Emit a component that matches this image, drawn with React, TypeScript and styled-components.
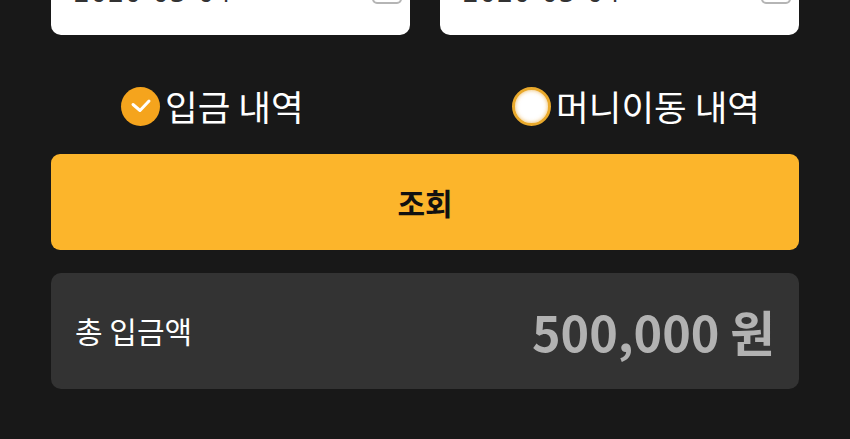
import React, { useState } from "react";
import styled, { createGlobalStyle } from "styled-components";

const Global = createGlobalStyle`
  html, body { margin: 0; padding: 0; background: #181818; overflow: hidden; }
  body { font-family: "Noto Sans CJK KR", "Noto Sans", sans-serif; }
`;

const Page = styled.div`
  width: 850px;
  height: 439px;
  box-sizing: border-box;
  padding: 0 51px;
  display: flex;
  flex-direction: column;
  overflow: hidden;
`;

const DateRow = styled.div`
  display: flex;
  gap: 30px;
  margin-top: -41px;
`;

const DateField = styled.div`
  flex: 1;
  height: 76px;
  background: #ffffff;
  border-radius: 10px;
  box-sizing: border-box;
  padding: 18px 8px 0 23px;
  display: flex;
  align-items: flex-start;
  justify-content: space-between;
`;

const DateText = styled.span`
  font-family: "Noto Sans", sans-serif;
  font-size: 26px;
  line-height: 30px;
  color: #333;
  letter-spacing: 2.3px;
`;

const CalendarBox = styled.span`
  width: 30px;
  height: 28px;
  border: 2px solid #b5b5b5;
  border-radius: 5px;
  box-sizing: border-box;
  margin-top: -1px;
`;

const RadioRow = styled.div`
  display: flex;
  justify-content: space-between;
  padding: 0 39px 0 70px;
  margin-top: 51px;
  height: 40px;
  align-items: center;
`;

const RadioLabel = styled.label`
  display: flex;
  align-items: center;
  gap: 5px;
  cursor: pointer;
  color: #ffffff;
  font-size: 35.5px;
  line-height: 40px;
`;

const Circle = styled.span<{ $checked: boolean }>`
  width: 39px;
  height: 39px;
  border-radius: 50%;
  box-sizing: border-box;
  display: flex;
  align-items: center;
  justify-content: center;
  background: ${(p) => (p.$checked ? "#f5a41d" : "#ffffff")};
  border: ${(p) => (p.$checked ? "none" : "3px solid #e9a92c")};
  box-shadow: ${(p) => (p.$checked ? "none" : "inset 0 0 4px rgba(230,160,40,0.7)")};
`;

const SearchButton = styled.button`
  margin-top: 28px;
  height: 96px;
  border: none;
  border-radius: 9px;
  background: #fcb52b;
  color: #111;
  font-family: "Noto Sans CJK KR", sans-serif;
  font-weight: 700;
  font-size: 30px;
  cursor: pointer;
  padding: 0;
`;

const TotalCard = styled.div`
  margin-top: 23px;
  height: 116px;
  background: #333333;
  border-radius: 10px;
  display: flex;
  align-items: center;
  justify-content: space-between;
  padding: 0 24px;
`;

const TotalLabel = styled.span`
  color: #ffffff;
  font-size: 30px;
  margin-top: -2px;
`;

const TotalAmount = styled.span`
  color: #b2b2b2;
  font-weight: 700;
  font-size: 48.5px;
`;

const Check = () => (
  <svg width="22" height="16" viewBox="0 0 22 16">
    <path d="M3 6.5 L10 12.5 L19 3" fill="none" stroke="#fff" strokeWidth="3" strokeLinecap="round" strokeLinejoin="round" />
  </svg>
);

export default function App() {
  const [mode, setMode] = useState<"deposit" | "transfer">("deposit");
  return (
    <>
      <Global />
      <Page>
        <DateRow>
          <DateField>
            <DateText>2020-03-04</DateText>
            <CalendarBox />
          </DateField>
          <DateField>
            <DateText>2020-03-04</DateText>
            <CalendarBox />
          </DateField>
        </DateRow>
        <RadioRow>
          <RadioLabel onClick={() => setMode("deposit")}>
            <Circle $checked={mode === "deposit"}>{mode === "deposit" && <Check />}</Circle>
            입금 내역
          </RadioLabel>
          <RadioLabel onClick={() => setMode("transfer")}>
            <Circle $checked={mode === "transfer"}>{mode === "transfer" && <Check />}</Circle>
            머니이동 내역
          </RadioLabel>
        </RadioRow>
        <SearchButton>조회</SearchButton>
        <TotalCard>
          <TotalLabel>총 입금액</TotalLabel>
          <TotalAmount>500,000 원</TotalAmount>
        </TotalCard>
      </Page>
    </>
  );
}
